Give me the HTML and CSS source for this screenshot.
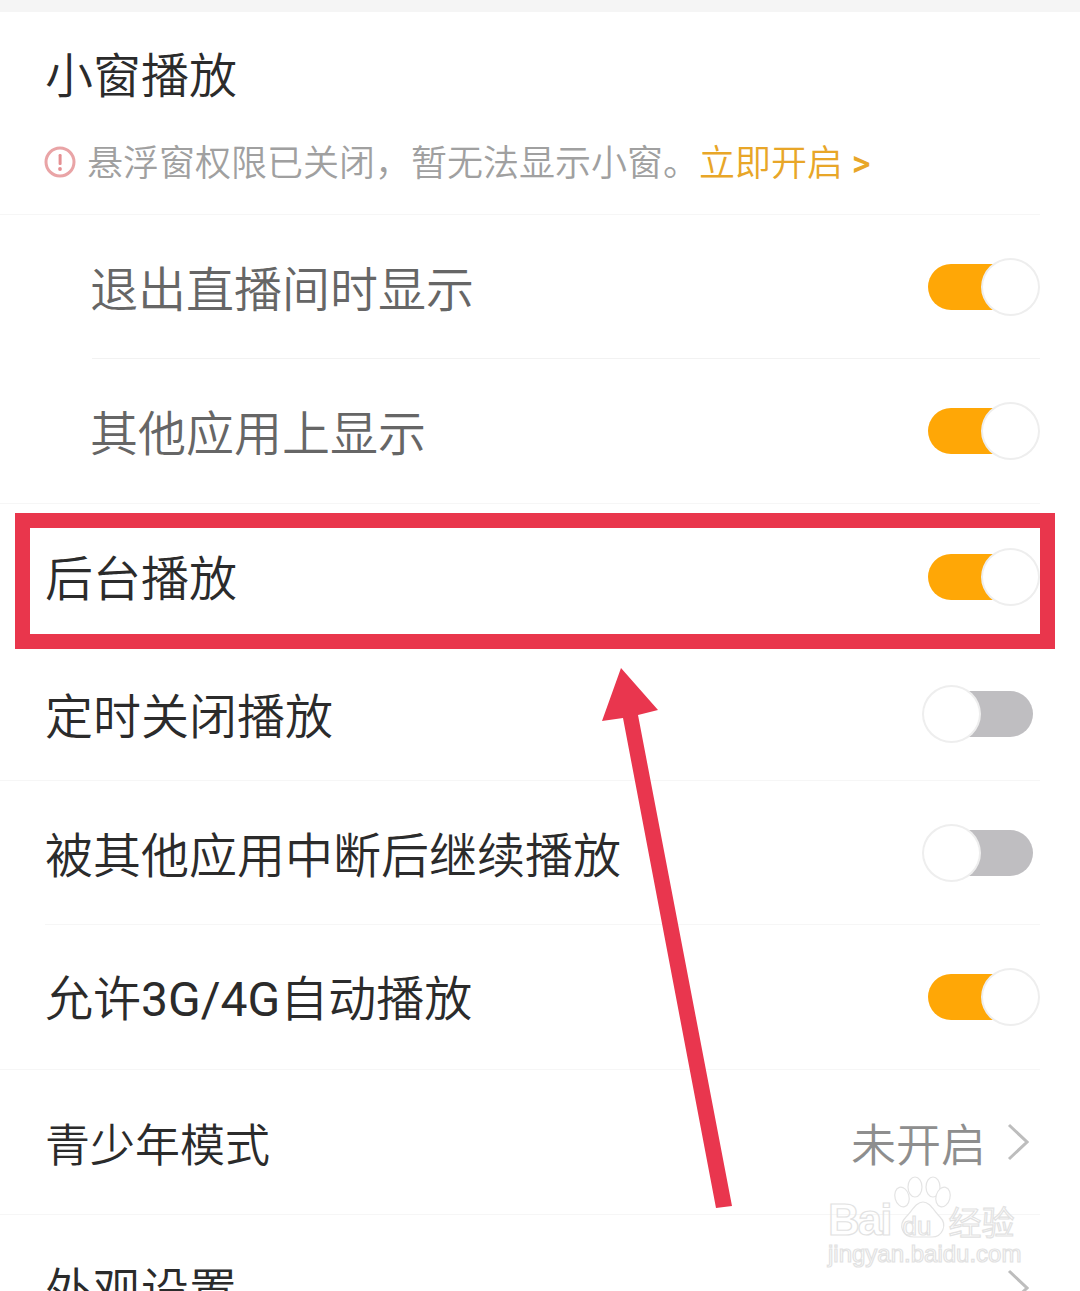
FILE: index.html
```html
<!DOCTYPE html>
<html lang="zh-CN">
<head>
<meta charset="UTF-8">
<meta name="viewport" content="width=device-width, initial-scale=1.0">
<title>播放设置</title>
<link rel="stylesheet" href="styles.css">
</head>
<body>
<div class="top-strip"></div>

<section class="head">
  <h1>小窗播放</h1>
  <p class="notice">
    <svg class="warn" viewBox="0 0 32 32"><circle cx="16" cy="16" r="14" fill="none" stroke="#e9a4a6" stroke-width="3"/><rect x="14.6" y="8" width="3" height="11" rx="1.2" fill="#e58f92"/><circle cx="16" cy="23" r="1.9" fill="#e58f92"/></svg>
    <span>悬浮窗权限已关闭，暂无法显示小窗。</span><a>立即开启 <b class="latin">&gt;</b></a>
  </p>
</section>

<div class="row sub r144 line-sub"><span class="label">退出直播间时显示</span><i class="toggle on"></i></div>
<div class="row sub r145 line-full"><span class="label">其他应用上显示</span><i class="toggle on"></i></div>
<div class="row r145 plain"><span class="label raised">后台播放</span><i class="toggle on"></i></div>
<div class="row r132 line-full"><span class="label">定时关闭播放</span><i class="toggle off"></i></div>
<div class="row r144 line-inset"><span class="label">被其他应用中断后继续播放</span><i class="toggle off"></i></div>
<div class="row r145 line-full"><span class="label raised">允许<b class="latin">3G/4G</b>自动播放</span><i class="toggle on"></i></div>
<div class="row r145 line-full"><span class="label small">青少年模式</span>
  <span class="value">未开启<svg class="chev" viewBox="0 0 22 38"><path d="M2 2 L20 19 L2 36" fill="none" stroke="#bdbdbd" stroke-width="3"/></svg></span>
</div>
<div class="row r145"><span class="label">外观设置</span>
  <span class="value"><svg class="chev" viewBox="0 0 22 38"><path d="M2 2 L20 19 L2 36" fill="none" stroke="#bdbdbd" stroke-width="3"/></svg></span>
</div>

<!-- annotations drawn over the screenshot -->
<div class="mark-box"></div>
<svg class="mark-arrow" viewBox="0 0 1080 1291"><path d="M621 668 L658 710 L638 715 L732 1206 L716 1208 L623 718 L602 721 Z" fill="#e9364e"/></svg>

<div class="watermark">
  <svg class="paw" viewBox="0 0 64 64"><g fill="#fff" stroke="#e4e4e4" stroke-width="1.2"><ellipse cx="12" cy="22" rx="7" ry="10" transform="rotate(-15 12 22)"/><ellipse cx="25" cy="12" rx="7" ry="10"/><ellipse cx="43" cy="12" rx="7" ry="10"/><ellipse cx="53" cy="22" rx="7" ry="10" transform="rotate(15 53 22)"/><path d="M33 27 C40 27 44 36 50 42 C58 50 52 62 42 62 L24 62 C12 62 8 50 16 42 C22 36 26 27 33 27 Z"/></g></svg>
  <div class="wm-line"><span class="wm-bai">Bai</span><span class="wm-du">du</span><span class="wm-cn">经验</span></div>
  <div class="wm-url">jingyan.baidu.com</div>
</div>
</body>
</html>
```

FILE: styles.css
```css
html, body { margin: 0; height: 1291px; overflow: hidden; background: #fff; }
body { position: relative; font-family: Roboto, "Noto Sans CJK SC", "Noto Sans", sans-serif; font-weight: 350; color: #2b2b2b; }

.top-strip { height: 12px; background: #f5f5f5; }
.latin { font-weight: 400; }

.head { height: 203px; padding-left: 45px; box-sizing: border-box; border-bottom: 1px solid #f6f6f6; margin-right: 40px; }
.head h1 { margin: 0; padding-top: 30px; font-size: 48px; font-weight: 350; line-height: 70px; }
.notice { display: flex; align-items: center; margin: 27px 0 0 -1px; font-size: 36px; line-height: 50px; color: #a0a0a0; }
.notice a { color: #e8a628; }
.notice .latin { font-weight: 500; }
.warn { width: 32px; height: 32px; margin-right: 11px; margin-top: -4px; }

.row { display: flex; align-items: center; justify-content: space-between; padding: 0 40px 0 45px; box-sizing: border-box; font-size: 48px; }
.r145 { height: 145px; }
.r144 { height: 144px; }
.r132 { height: 132px; padding-bottom: 2px; }
.sub { padding-left: 90px; color: #666; }
.label { position: relative; top: -1px; }
.raised { top: -2px; }
.small { font-size: 45px; top: 0; }

.line-full { border-bottom: 1px solid #f6f6f6; margin-right: 40px; padding-right: 0; }
.line-inset { border-bottom: 1px solid #f6f6f6; margin: 0 40px 0 45px; padding: 0; }
.line-sub { margin-left: 92px; margin-right: 40px; padding: 0; border-bottom: 1px solid #f2f2f2; }
.line-sub .label { left: -2px; }

.toggle { display: block; position: relative; height: 46px; }
.toggle::after { content: ""; position: absolute; top: -6px; width: 59px; height: 58px; box-sizing: border-box; border: 2px solid #eee; border-radius: 50%; background: #fff; }
.toggle.on { width: 104px; margin-right: 8px; border-radius: 23px; background: #ffa706; }
.toggle.on::after { right: -8px; }
.toggle.off { width: 100px; margin-right: 7px; border-radius: 23px; background: #bfbec1; }
.toggle.off::after { left: -11px; }

.value { display: flex; align-items: center; font-size: 45px; color: #8e8e8e; }
.chev { width: 22px; height: 38px; margin-left: 21px; margin-right: 11px; }

.mark-box { position: absolute; left: 15px; top: 513px; width: 1040px; height: 136px; box-sizing: border-box; border: 15px solid #e9364c; }
.mark-arrow { position: absolute; left: 0; top: 0; width: 1080px; height: 1291px; }

.watermark { position: absolute; left: 830px; top: 1175px; width: 200px; color: transparent; -webkit-text-stroke: 1.2px #e2e2e2; }
.paw { position: absolute; left: 60px; top: 0; width: 64px; height: 64px; }
.wm-line { position: relative; display: flex; align-items: baseline; padding-top: 31px; font-family: "Liberation Sans", sans-serif; line-height: 28px; }
.wm-bai { font-size: 44px; font-weight: 700; letter-spacing: -2px; margin-left: -2px; }
.wm-du { font-size: 26px; margin: 0 19px 0 12px; }
.wm-cn { font-family: "Noto Sans CJK SC", sans-serif; font-size: 33px; margin-left: -2px; }
.wm-url { font-family: "Liberation Sans", sans-serif; font-size: 24px; line-height: 28px; margin-left: -2px; white-space: nowrap; }
```
